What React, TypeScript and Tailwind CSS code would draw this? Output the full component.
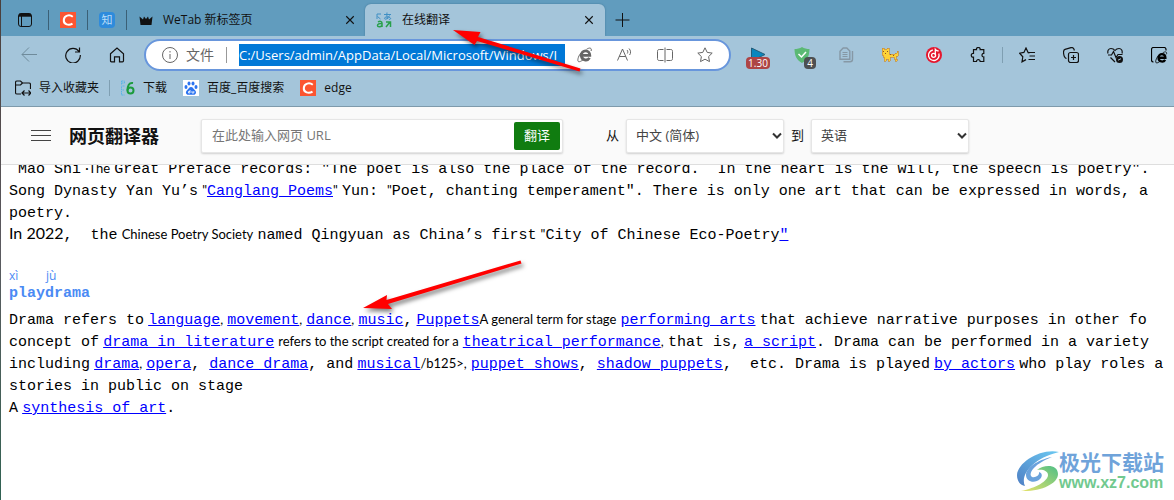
import React, { useState } from "react";

type IconProps = { children: React.ReactNode; size?: number; className?: string };

function Icon({ children, size = 16, className = "" }: IconProps) {
  return (
    <svg
      width={size}
      height={size}
      viewBox="0 0 16 16"
      fill="none"
      stroke="currentColor"
      strokeWidth="1"
      className={"shrink-0 " + className}
    >
      {children}
    </svg>
  );
}

function ToolButton({
  label,
  children,
}: {
  label: string;
  children: React.ReactNode;
}) {
  return (
    <button
      aria-label={label}
      className="relative flex h-8 w-11 shrink-0 items-center justify-center"
    >
      {children}
    </button>
  );
}

function CloseIcon() {
  return (
    <Icon size={10}>
      <path d="M2 2 14 14M14 2 2 14" strokeWidth="1.800" />
    </Icon>
  );
}

function CLogo() {
  return (
    <svg width="16" height="16" viewBox="0 0 16 16" className="shrink-0">
      <rect width="16" height="16" fill="#fc5531" />
      <path
        d="M12.800 4.800C9.500 2.200 4.200 3.200 3.800 8c-.3 4.600 5 6 8.700 3.600"
        fill="none"
        stroke="#fff"
        strokeWidth="2"
      />
    </svg>
  );
}

function IeGlyph({ size = 16 }: { size?: number }) {
  return (
    <svg
      width={size}
      height={size}
      viewBox="0 0 16 16"
      fill="none"
      stroke="currentColor"
      className="shrink-0"
    >
      <path
        d="M4.500 8.300h8.300C12.800 2.300 4.300 2.300 4.300 8.300c0 5.400 6.300 5.900 8.200 2.600"
        strokeWidth="2.800"
      />
      <path
        d="M9.500 2.300c3-2 5.600-1.600 4.600 1.700M3.800 6C.8 10 .2 14 1.500 14.600c1 .5 3-.6 4.500-1.800"
        strokeWidth="1"
      />
    </svg>
  );
}

function TitleBar() {
  return (
    <div className="flex h-9 items-end bg-[#619cbe] pl-4">
      <div className="flex h-8 items-center">
        <button aria-label="Tab actions">
          <Icon>
            <rect x="1.500" y="1.500" width="13" height="13" rx="2.500" />
            <path d="M2 3.200h12" strokeWidth="3" />
            <path d="M4.500 4v10" />
          </Icon>
        </button>
        <span className="ml-[15px] h-5 w-px bg-[#3b6076]" />
        <span className="ml-[11px]">
          <CLogo />
        </span>
        <span className="ml-[11px] h-5 w-px bg-[#3b6076]" />
        <span className="ml-[11px] flex h-4 w-4 items-center justify-center rounded-sm bg-[#2e8bdc] text-[11px] leading-4 text-[#b9dcf8]">
          知
        </span>
        <span className="ml-[11px] h-5 w-px bg-[#3b6076]" />
      </div>
      <div className="flex h-8 w-[238px] items-center pr-[10px] pl-3">
        <svg width="14" height="16" viewBox="0 0 14 16" className="shrink-0">
          <path
            d="M.5 4.500 4 7.500 5 4.500l2 2.500 2-2.500 1 3 3.500-3L12.500 13h-11z"
            fill="#111"
          />
        </svg>
        <span className="ml-[10px] flex-1 text-xs">WeTab 新标签页</span>
        <button aria-label="Close tab">
          <CloseIcon />
        </button>
      </div>
      <div className="flex h-8 w-60 items-center rounded-t-md bg-[#a4c5da] pr-[11px] pl-[11px] shadow-[0_0_2px_#3f7495]">
        <svg
          width="16"
          height="16"
          viewBox="0 0 16 16"
          fill="none"
          className="shrink-0"
        >
          <path
            d="M1 2v5M1 2h4M1.500 4.500l3 2.500M8 2.500h7M11 .5c-.5 3 0 5 1 6.500M13.500 3.500C12 7 9 8 8.500 6.500s4-2.500 6-.5c.5 1-.5 1.500-1.500 1.500"
            stroke="#3f8fc4"
          />
          <path
            d="M2 10c1.500-1 4-1 4 1v4M6 11.500c-3-.3-4.500.5-4.500 2s3 2 4.500 0M10 15l4-5M10 10h4.500v5"
            stroke="#28a04a"
            strokeWidth="1.500"
          />
        </svg>
        <span className="ml-[10px] flex-1 text-xs">在线翻译</span>
        <button aria-label="Close tab">
          <CloseIcon />
        </button>
      </div>
      <button aria-label="New tab" className="ml-[9px] flex h-8 items-center">
        <Icon>
          <path d="M8.500 1v14M1.500 8h14" />
        </Icon>
      </button>
    </div>
  );
}

function AddressBar() {
  const [url, setUrl] = useState(
    "C:/Users/admin/AppData/Local/Microsoft/Windows/I",
  );
  return (
    <div className="ml-[5px] flex h-8 min-w-0 flex-1 items-center rounded-full border-2 border-[#6896dc] bg-white px-4 text-[#666]">
      <Icon>
        <circle cx="8" cy="8" r="7.500" />
        <path d="M8 7v5M8 4v1.500" />
      </Icon>
      <span className="ml-2 shrink-0 text-sm">文件</span>
      <span className="ml-3 h-4 w-px shrink-0 bg-[#999]" />
      <input
        aria-label="Address"
        value={url}
        onChange={(e) => setUrl(e.target.value)}
        className="ml-3 h-[22px] min-w-0 flex-1 bg-[#0078d7] text-[13px] text-white outline-none"
      />
      <div className="ml-3 flex shrink-0 gap-6">
        <IeGlyph />
        <Icon>
          <path d="M.5 13.500 5.500 2l5 11.500M2.200 9.500h6.600M10 3c1 1 1 2.500.3 3.500M12 1.500c2 2 2 4.500.6 6.500" />
        </Icon>
        <Icon>
          <path d="M6.500 2.500h-4c-1.500 0-2 .5-2 2v7c0 1.500.5 2 2 2h4M9.500 2.500h4c1.500 0 2 .5 2 2v7c0 1.500-.5 2-2 2h-4M8 .5v15" />
        </Icon>
        <Icon>
          <path d="m8 .8 2.200 4.600 5 .7-3.600 3.500.9 5L8 12.200l-4.500 2.400.9-5L.8 6.100l5-.7z" />
        </Icon>
      </div>
    </div>
  );
}

function Extensions() {
  return (
    <div className="-mr-[7px] ml-[5px] flex shrink-0 items-center">
      <ToolButton label="Video speed">
        <svg width="16" height="16" viewBox="0 0 16 16">
          <path d="M1.500 1v13L15 7.500z" fill="#0a86bd" stroke="#245c78" />
        </svg>
        <span className="absolute top-[18px] left-[10px] h-3 w-6 rounded-sm bg-[#ae4545] text-center text-[10px] leading-3 text-white">
          1.30
        </span>
      </ToolButton>
      <ToolButton label="Shield">
        <svg width="16" height="16" viewBox="0 0 16 16">
          <path
            d="M8 0c2 1.500 5 2 7.500 2-.2 7-2 11-7.500 14C2.500 13 .7 9 .5 2 3 2 6 1.500 8 0z"
            fill="#5bb974"
          />
          <path d="m4.500 7 3 3L12 5" fill="none" stroke="#fff" strokeWidth="1.500" />
        </svg>
        <span className="absolute top-[18px] left-[24px] h-3 w-3 rounded-sm bg-[#4d5052] text-center text-[10px] leading-3 text-white">
          4
        </span>
      </ToolButton>
      <ToolButton label="Copy">
        <Icon className="text-[#8698a5]">
          <path
            d="M5.200 1h3.600l3 3v8.200H2V4.200zM5.500 14.800H12c1.500 0 2.500-1 2.500-2.500V4"
            strokeWidth="1.400"
          />
          <path d="M4.500 5.500h5M4.500 7.500h5M4.500 9.500h5" />
        </Icon>
      </ToolButton>
      <ToolButton label="Cat">
        <svg width="18" height="16" viewBox="0 0 18 16" shapeRendering="crispEdges">
          <path
            d="M1 1h2v1h3V1h2v6h6V6h2V4h1v5h-2v3h1v2h-2v-2h-1v-2H9v4H7v-2H5v2H3v-4H2V8H1z"
            fill="#fdd237"
            stroke="#c58a3c"
            strokeWidth=".7"
          />
          <path
            d="M2 4h1v1H2zM6 4h1v1H6zM4 6h1v1H4zM9 7h1v1H9zM12 8h1v1h-1z"
            fill="#8a5626"
          />
        </svg>
      </ToolButton>
      <ToolButton label="Music">
        <svg width="16" height="16" viewBox="0 0 16 16" fill="none" stroke="#fff">
          <circle cx="8" cy="8" r="8" fill="#e6162d" stroke="none" />
          <path
            d="M6.800 3a5.300 5.300 0 1 0 6 3.500M9.300 8V2.500c1 1.400 2.200 1.200 3.300 1.500"
            strokeWidth="1.300"
          />
          <circle cx="7.600" cy="8.300" r="2" strokeWidth="1.300" />
        </svg>
      </ToolButton>
      <ToolButton label="Extensions">
        <Icon>
          <path
            d="M3.500 2.700h3C5.800-.3 10.800-.3 10.100 2.700h3.700v3.600c-2.400-.2-2.400 3.900 0 3.700v4.500h-3.700c.3-2.400-3.900-2.400-3.600 0h-3v-4.300c-3 .5-3-4.300 0-3.900z"
            strokeWidth="1.200"
          />
        </Icon>
      </ToolButton>
      <span className="mx-[2px] h-4 w-px bg-[#7f9fb2]" />
      <ToolButton label="Favorites">
        <Icon>
          <path
            d="M10.500 6 9.200 5.700 7 1 4.900 5.400.6 6.200l3.200 3.600-.8 5 4-2.200M9.500 5.500H16M10.500 9H16M9.500 12.500H16"
            strokeWidth="1.200"
          />
        </Icon>
      </ToolButton>
      <ToolButton label="Collections">
        <Icon>
          <rect x="5.500" y="5.500" width="10" height="10" rx="2" strokeWidth="1.200" />
          <path
            d="M10.500 8v5M8 10.500h5M3.500 11.500C1.500 11 .9 9 .6 6.500.3 4 .7 2.800 2 2.400L8 .7c1.500-.4 2.500 0 3 1.500l.4 1.300"
            strokeWidth="1.200"
          />
        </Icon>
      </ToolButton>
      <ToolButton label="Browser essentials">
        <Icon>
          <path
            d="M1 6.500C.3 4 1.500 1.500 4 1.500c2 0 3.200 1 4 2 .8-1 2-2 4-2 2.500 0 3.700 2.500 3 5M1 8h3.500l2-3.500L9 10.500 11 7.500h4.500M3.500 10.500 8 15"
            strokeWidth="1.200"
          />
          <circle cx="12.500" cy="12.500" r="3.500" fill="currentColor" stroke="none" />
          <path d="m11 13.200 3-1.500" stroke="#a4c5da" />
        </Icon>
      </ToolButton>
      <ToolButton label="IE mode">
        <span className="relative text-black">
          <Icon>
            <path
              d="M15 3.500V2.500c0-1.200-.7-2-2-2H2.500c-1.300 0-2 .8-2 2v10.500c0 1.200.7 2 2 2"
              strokeWidth="1.200"
            />
          </Icon>
          <span className="absolute top-1 left-1">
            <IeGlyph size={13} />
          </span>
        </span>
      </ToolButton>
    </div>
  );
}

function Toolbar() {
  return (
    <div className="flex h-[38px] items-center bg-[#a4c5da] pl-[6px]">
      <ToolButton label="Back">
        <Icon className="text-[#6f8b9b]">
          <path d="M16 7.500H1M8 .5l-7 7 7 7" />
        </Icon>
      </ToolButton>
      <ToolButton label="Refresh">
        <Icon>
          <path
            d="M14 4.500A7.300 7.300 0 1 0 15.300 8M14.500.5v4.500H10"
            strokeWidth="1.200"
          />
        </Icon>
      </ToolButton>
      <ToolButton label="Home">
        <Icon>
          <path
            d="M1.500 6.800 8 1l6.500 5.800v7c0 .6-.3 1-1 1h-3v-5h-5v5h-3c-.7 0-1-.4-1-1z"
            strokeWidth="1.200"
          />
        </Icon>
      </ToolButton>
      <AddressBar />
      <Extensions />
    </div>
  );
}

function BookmarksBar() {
  return (
    <div className="flex h-[33px] items-start border-b border-[#7e9aab] bg-[#a4c5da] pt-[5px] pl-[14px] text-xs">
      <div className="flex h-[18px] items-center">
        <Icon>
          <path
            d="M6 14H2c-1 0-1.500-.5-1.500-1.500V2.500C.5 1.500 1 1 2 1h3.500l2 2H14c1 0 1.500.5 1.500 1.500V9M.5 5h5l2-2M7 13h9M9.500 10.500 7 13l2.500 2.500M13.500 10.500 16 13l-2.500 2.500"
            strokeWidth="1.200"
          />
        </Icon>
        <a href="#import" className="ml-2">
          导入收藏夹
        </a>
        <span className="ml-[10px] h-4 w-px bg-[#7f9fb2]" />
        <svg
          width="16"
          height="16"
          viewBox="0 0 16 16"
          fill="none"
          className="ml-[10px]"
        >
          <path
            d="M1.500 1v4M1.500 1h3v2h-3M4.500 6h-3v4h3M1.500 11v4h3"
            stroke="#5bb5e6"
            strokeDasharray="1.500 .5"
          />
          <circle cx="10.500" cy="10.500" r="3" stroke="#1b9b3c" strokeWidth="2" />
          <path d="M13 3c-4-.8-5.500 3-5.500 7.500" stroke="#1b9b3c" strokeWidth="2" />
        </svg>
        <a href="#download" className="ml-[7px]">
          下载
        </a>
        <svg width="16" height="16" viewBox="0 0 16 16" className="ml-4">
          <rect width="16" height="16" fill="#fff" />
          <g fill="#2c74f0">
            <ellipse cx="3" cy="7" rx="1.500" ry="2" />
            <ellipse cx="6" cy="3.500" rx="1.500" ry="2" />
            <ellipse cx="10" cy="3.500" rx="1.500" ry="2" />
            <ellipse cx="13" cy="7" rx="1.500" ry="2" />
            <path d="M8 7c2 0 2.500 2 4 3.300 2 2 .8 4.700-1.500 4.500-2-.2-3-.2-5 0C3 15 2 12.300 4 10.300 5.500 9 6 7 8 7z" />
          </g>
          <path
            d="M7 10v3H5.500v-1.500H7M9 11v2h1.800v-2"
            fill="none"
            stroke="#fff"
            strokeWidth=".8"
          />
        </svg>
        <a href="#baidu" className="ml-2">
          百度_百度搜索
        </a>
        <span className="ml-4">
          <CLogo />
        </span>
        <a href="#edge" className="ml-2">
          edge
        </a>
      </div>
    </div>
  );
}

function LanguageSelect({
  id,
  label,
  options,
}: {
  id: string;
  label: string;
  options: string[];
}) {
  return (
    <div className="flex items-center gap-[7px]">
      <label htmlFor={id} className="text-[13px]">
        {label}
      </label>
      <div className="relative">
        <select
          id={id}
          className="h-[34px] w-[158px] appearance-none rounded-xs border border-[#e6e6e6] bg-white pl-[9px] text-[13px] text-[#444] shadow-[0_1px_2px_#0000002a]"
        >
          {options.map((o) => (
            <option key={o}>{o}</option>
          ))}
        </select>
        <svg
          width="10"
          height="8"
          viewBox="0 0 10 8"
          className="pointer-events-none absolute top-[13px] right-[2px]"
        >
          <path d="m1 1.500 4 4 4-4" fill="none" stroke="#333" strokeWidth="2" />
        </svg>
      </div>
    </div>
  );
}

function TranslatorHeader() {
  return (
    <div className="flex h-[58px] items-center border-b border-[#dedede] bg-[#fafafa] pl-[30px]">
      <button aria-label="Menu" className="flex w-5 flex-col gap-1">
        <span className="h-px bg-[#444]" />
        <span className="h-px bg-[#444]" />
        <span className="h-px bg-[#444]" />
      </button>
      <h1 className="ml-[18px] text-lg font-bold text-[#111]">网页翻译器</h1>
      <form
        onSubmit={(e) => e.preventDefault()}
        className="ml-[42px] flex h-[34px] w-[362px] items-center rounded-xs border border-[#e6e6e6] bg-white pr-[2px] shadow-[0_1px_2px_#0000002a]"
      >
        <input
          aria-label="URL"
          placeholder="在此处输入网页 URL"
          className="min-w-0 flex-1 pl-[10px] text-[13px] outline-none placeholder:text-[#767676]"
        />
        <button className="h-7 w-[46px] rounded-xs bg-[#107c10] text-[13px] text-white">
          翻译
        </button>
      </form>
      <div className="ml-[43px] flex gap-[7px]">
        <LanguageSelect id="from" label="从" options={["中文 (简体)", "英语"]} />
        <LanguageSelect id="to" label="到" options={["英语", "中文 (简体)"]} />
      </div>
    </div>
  );
}

function Link({ children }: { children: React.ReactNode }) {
  return (
    <a href="#entry" className="text-[#0000ff] underline">
      {children}
    </a>
  );
}

function Small({ children }: { children: React.ReactNode }) {
  return (
    <span className="font-[Lato] text-[13px] leading-[0]">{children}</span>
  );
}

// narrow space between runs of translated text
function Gap() {
  return <span className="font-[Lato] text-base leading-[0]"> </span>;
}

function Article() {
  return (
    <div className="flex-1 overflow-hidden bg-white pl-2 font-['Liberation_Mono',monospace] text-[15px] leading-[22px] whitespace-pre text-black">
      <p className="-mt-1.5">
        {" Mao Shi"}
        <Gap />
        <Small>·The</Small>
        <Gap />
        {'Great Preface records: "The poet is also the place of the record.  In the heart is the will, the speech is poetry".'}
      </p>
      <p>
        {"Song Dynasty Yan Yu’s"}
        <Gap />
        <Small>{'"'}</Small>
        <Link>Canglang Poems</Link>
        <Small>{'"'}</Small>
        <Gap />
        {"Yun: "}
        <Small>{'"'}</Small>
        {'Poet, chanting temperament". There is only one art that can be expressed in words, a'}
      </p>
      <p>poetry.</p>
      <p>
        <span className="font-[Lato] text-base leading-[0]">In 2022</span>
        {",  the"}
        <Gap />
        <Small>Chinese Poetry Society</Small>
        <Gap />
        {"named Qingyuan as China’s first"}
        <Gap />
        <Small>{'"'}</Small>
        {"City of Chinese Eco-Poetry"}
        <Link>{'"'}</Link>
      </p>
      <h2 className="mt-[21px] text-[#4a8af4]">
        <span className="flex font-['Open_Sans'] text-xs leading-4">
          <span className="w-[37px]">xì</span>
          <span>jù</span>
        </span>
        <span className="block leading-5 font-bold">playdrama</span>
      </h2>
      <p className="mt-1.5">
        {"Drama refers to"}
        <Gap />
        <Link>language</Link>
        <Small>,</Small>
        <Gap />
        <Link>movement</Link>
        <Small>,</Small>
        <Gap />
        <Link>dance</Link>
        <Small>,</Small>
        <Gap />
        <Link>music</Link>
        {","}
        <Gap />
        <Link>Puppets</Link>
        <Small>A general term for stage</Small>
        <Gap />
        <Link>performing arts</Link>
        <Gap />
        {"that achieve narrative purposes in other fo"}
      </p>
      <p>
        {"concept of"}
        <Gap />
        <Link>drama in literature</Link>
        <Gap />
        <Small>refers to the script created for a</Small>
        <Gap />
        <Link>theatrical performance</Link>
        <Small>,</Small>
        <Gap />
        {"that is,"}
        <Gap />
        <Link>a script</Link>
        {". Drama can be performed in a variety"}
      </p>
      <p>
        {"including"}
        <Gap />
        <Link>drama</Link>
        <Small>,</Small>
        <Gap />
        <Link>opera</Link>
        {", "}
        <Link>dance drama</Link>
        {", and"}
        <Gap />
        <Link>musical</Link>
        <Small>{"/b125>,"}</Small>
        <Gap />
        <Link>puppet shows</Link>
        {", "}
        <Link>shadow puppets</Link>
        {",  etc. Drama is played"}
        <Gap />
        <Link>by actors</Link>
        <Gap />
        {"who play roles a"}
      </p>
      <p>stories in public on stage</p>
      <p>
        {"A"}
        <Gap />
        <Link>synthesis of art</Link>
        {"."}
      </p>
    </div>
  );
}

function Watermark() {
  return (
    <div className="absolute right-[10px] bottom-2 flex items-center">
      <svg width="42" height="42" viewBox="0 0 42 42">
        <defs>
          <linearGradient id="blue" x1="0" y1="1" x2="1" y2="0">
            <stop offset="0" stopColor="#4f7fc4" />
            <stop offset="1" stopColor="#6cc9f2" />
          </linearGradient>
          <linearGradient id="green" x1="0" y1="1" x2="1" y2="0">
            <stop offset="0" stopColor="#e9e36a" />
            <stop offset="1" stopColor="#4fbf86" />
          </linearGradient>
        </defs>
        <path
          d="M42 2C24-2 1 12 0 25c0 6 3 10 8 11C3 26 14 9 42 2z"
          fill="url(#blue)"
        />
        <path
          d="M35 7C20 10 9 18 9 25c0 7 9 9 14 4 3-3 2-6-1-7 1 4-6 7-8 4-2-6 8-14 21-19z"
          fill="#6aa2dc"
        />
        <path
          d="M20 20c7-6 21-6 21 4 0 10-18 18-37 17 15-3 27-10 27-16 0-4-5-6-11-5z"
          fill="url(#green)"
        />
      </svg>
      <div className="flex flex-col font-bold">
        <span className="text-[21px] leading-6 text-[#6fa3da]">极光下载站</span>
        <span className="font-['Liberation_Sans'] text-base leading-[18px] text-[#71c98f]">
          www.xz7.com
        </span>
      </div>
    </div>
  );
}

function Arrows() {
  return (
    <svg
      width="600"
      height="330"
      viewBox="0 0 600 330"
      fill="#ff0000"
      className="pointer-events-none absolute top-0 left-0 drop-shadow-[2px_3px_2px_#00000080]"
    >
      <path d="M453 30 480.500 32 478 37 580.500 68.500 579.500 71.500 477 41 474.500 45z" />
      <path d="M363 308 387 295 386.500 300 520.500 260.500 521.500 263.500 388 304 392 309z" />
    </svg>
  );
}

export default function App() {
  return (
    <div className="relative flex min-h-screen overflow-hidden bg-white font-['Open_Sans','Noto_Sans_CJK_SC',sans-serif] text-[#111]">
      <div className="w-px shrink-0 bg-linear-to-b from-[#4a3f3c] via-[#5b5a60] to-[#2f6252]" />
      <div className="flex min-w-0 flex-1 flex-col">
        <TitleBar />
        <Toolbar />
        <BookmarksBar />
        <TranslatorHeader />
        <Article />
      </div>
      <Arrows />
      <Watermark />
    </div>
  );
}
